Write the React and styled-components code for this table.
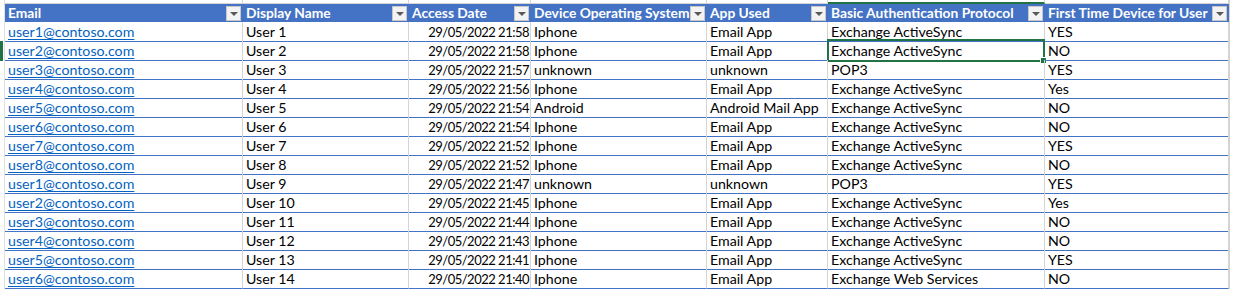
import React from "react"
import styled, { createGlobalStyle, css } from "styled-components"

const GlobalStyle = createGlobalStyle`
    html, body {
        margin: 0;
        padding: 0;
        background: #ffffff;
    }
    body {
        font-family: Lato, "Open Sans", "Liberation Sans", sans-serif;
        font-size: 14.2px;
        color: #000;
    }
`

const COLS = "5px 238px 166px 122px 176px 121px 217px 184px 1fr"

const Sheet = styled.div`
    width: 1241px;
    height: 290px;
    overflow: hidden;
    background: #fff;
`

const Row = styled.div`
    display: grid;
    grid-template-columns: ${COLS};
    height: ${(p) => p.$height}px;
`

const Gutter = styled.div`
    position: relative;
    border-right: 1px solid #e1e1e1;
    ${(p) =>
        p.$active &&
        css`
            &::before {
                content: "";
                position: absolute;
                left: 0;
                top: 0;
                bottom: 0;
                width: 3px;
                background: #217346;
            }
        `}
`

const TopCell = styled.div`
    border-right: 1px solid #d4d4d4;
    border-bottom: 1px solid #d4d4d4;
    ${(p) =>
        p.$active &&
        css`
            border-bottom: 2px solid #217346;
        `}
`

const HeadCell = styled.div`
    display: flex;
    align-items: center;
    justify-content: space-between;
    background: #4472c4;
    color: #fff;
    font-weight: 700;
    font-size: 13.8px;
    padding-left: 3px;
    padding-right: 1px;
    border-right: 1px solid #4472c4;
    white-space: nowrap;
    overflow: hidden;
    line-height: 18px;
`

const FilterButton = styled.span`
    flex: none;
    width: 15px;
    height: 15px;
    box-sizing: border-box;
    background: #f3f3f3;
    border: 1px solid #c8c8c8;
    display: flex;
    align-items: center;
    justify-content: center;
    &::after {
        content: "";
        border-left: 4px solid transparent;
        border-right: 4px solid transparent;
        border-top: 4px solid #595959;
        margin-top: 1px;
    }
`

const Cell = styled.div`
    position: relative;
    box-sizing: border-box;
    border-right: 1px solid #d4d4d4;
    border-bottom: 1px solid #4472c4;
    padding: 1px 3px 0;
    line-height: 18px;
    white-space: nowrap;
    overflow: visible;
    text-align: ${(p) => p.$align || "left"};
    ${(p) =>
        p.$align === "right" &&
        css`
            font-size: 13px;
            letter-spacing: -0.5px;
            padding-right: 1px;
        `}
`

const BlankRight = styled.div`
    border-left: 1px solid #d4d4d4;
`

const Link = styled.a`
    color: #0563c1;
    text-decoration: underline;
    text-underline-offset: 2px;
`

const Selection = styled.div`
    position: absolute;
    left: -1px;
    top: -2px;
    right: -1px;
    bottom: -2px;
    border: 2px solid #217346;
    pointer-events: none;
    &::after {
        content: "";
        position: absolute;
        right: -4px;
        bottom: -4px;
        width: 5px;
        height: 5px;
        background: #217346;
        border: 1px solid #fff;
    }
`

const headers = [
    "Email",
    "Display Name",
    "Access Date",
    "Device Operating System",
    "App Used",
    "Basic Authentication Protocol",
    "First Time Device for User",
]

const rows = [
    ["user1@contoso.com", "User 1", "29/05/2022 21:58", "Iphone", "Email App", "Exchange ActiveSync", "YES"],
    ["user2@contoso.com", "User 2", "29/05/2022 21:58", "Iphone", "Email App", "Exchange ActiveSync", "NO"],
    ["user3@contoso.com", "User 3", "29/05/2022 21:57", "unknown", "unknown", "POP3", "YES"],
    ["user4@contoso.com", "User 4", "29/05/2022 21:56", "Iphone", "Email App", "Exchange ActiveSync", "Yes"],
    ["user5@contoso.com", "User 5", "29/05/2022 21:54", "Android", "Android Mail App", "Exchange ActiveSync", "NO"],
    ["user6@contoso.com", "User 6", "29/05/2022 21:54", "Iphone", "Email App", "Exchange ActiveSync", "NO"],
    ["user7@contoso.com", "User 7", "29/05/2022 21:52", "Iphone", "Email App", "Exchange ActiveSync", "YES"],
    ["user8@contoso.com", "User 8", "29/05/2022 21:52", "Iphone", "Email App", "Exchange ActiveSync", "NO"],
    ["user1@contoso.com", "User 9", "29/05/2022 21:47", "unknown", "unknown", "POP3", "YES"],
    ["user2@contoso.com", "User 10", "29/05/2022 21:45", "Iphone", "Email App", "Exchange ActiveSync", "Yes"],
    ["user3@contoso.com", "User 11", "29/05/2022 21:44", "Iphone", "Email App", "Exchange ActiveSync", "NO"],
    ["user4@contoso.com", "User 12", "29/05/2022 21:43", "Iphone", "Email App", "Exchange ActiveSync", "NO"],
    ["user5@contoso.com", "User 13", "29/05/2022 21:41", "Iphone", "Email App", "Exchange ActiveSync", "YES"],
    ["user6@contoso.com", "User 14", "29/05/2022 21:40", "Iphone", "Email App", "Exchange Web Services", "NO"],
]

const SELECTED_ROW = 1
const SELECTED_COL = 5

export default function App() {
    return (
        <>
            <GlobalStyle />
            <Sheet>
                <Row $height={4}>
                    <Gutter />
                    {headers.map((h, i) => (
                        <TopCell key={h} $active={i === SELECTED_COL} />
                    ))}
                    <BlankRight />
                </Row>
                <Row $height={18}>
                    <Gutter />
                    {headers.map((h) => (
                        <HeadCell key={h}>
                            <span>{h}</span>
                            <FilterButton />
                        </HeadCell>
                    ))}
                    <BlankRight />
                </Row>
                {rows.map((row, r) => (
                    <Row key={r} $height={19}>
                        <Gutter $active={r === SELECTED_ROW} />
                        {row.map((value, c) => (
                            <Cell key={c} $align={c === 2 ? "right" : "left"}>
                                {c === 0 ? <Link>{value}</Link> : value}
                                {r === SELECTED_ROW && c === SELECTED_COL && (
                                    <Selection />
                                )}
                            </Cell>
                        ))}
                        <BlankRight />
                    </Row>
                ))}
            </Sheet>
        </>
    )
}
